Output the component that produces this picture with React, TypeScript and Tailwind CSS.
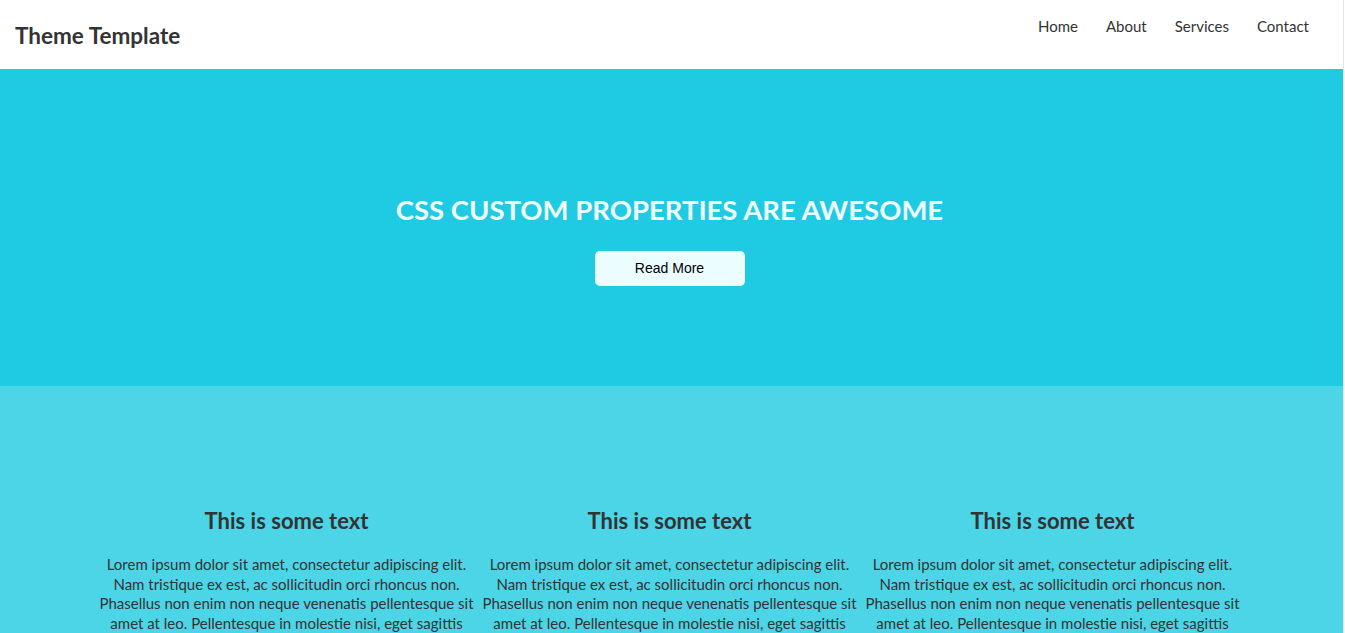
import React from "react";

const lorem =
  "Lorem ipsum dolor sit amet, consectetur adipiscing elit. Nam tristique ex est, ac sollicitudin orci rhoncus non. Phasellus non enim non neque venenatis pellentesque sit amet at leo. Pellentesque in molestie nisi, eget sagittis arcu. Vivamus vitae elit ut nisl pretium aliquet.";

export default function App() {
  const font = { fontFamily: "Lato, 'Open Sans', sans-serif" };
  return (
    <div className="h-[633px] w-[1344px] overflow-hidden border-r border-[#e5e5e5] bg-white" style={font}>
      <header className="flex h-[69px] items-start justify-between bg-white">
        <div className="pl-[15px] pt-[22px] text-[22.5px] font-bold leading-[28px] text-[#333]">
          Theme Template
        </div>
        <nav className="flex gap-[28px] pr-[34px] pt-[16px] text-[15px] leading-[20px] text-[#333]">
          <a>Home</a>
          <a>About</a>
          <a>Services</a>
          <a>Contact</a>
        </nav>
      </header>
      <section className="flex h-[317px] flex-col items-center bg-[#1fcbe2] pr-[4px] pt-[123px]">
        <h1 className="text-[27.5px] font-bold leading-[36px] text-[#f0fdff]">
          CSS CUSTOM PROPERTIES ARE AWESOME
        </h1>
        <button
          className="mt-[23px] h-[35px] w-[150px] rounded-[5px] bg-[#ecfdff] text-[14px] text-black"
          style={{ fontFamily: "'Liberation Sans', Arial, sans-serif" }}
        >
          Read More
        </button>
      </section>
      <section className="h-[247px] bg-[#4bd5e6] pt-[120px]">
        <div className="ml-[95px] grid w-[1149px] grid-cols-3">
          {[0, 1, 2].map((i) => (
            <div key={i} className="text-center text-[#333]">
              <h2 className="text-[22px] font-bold leading-[30px]">This is some text</h2>
              <p className="mt-[19px] text-[15px] leading-[19.5px]">{lorem}</p>
            </div>
          ))}
        </div>
      </section>
    </div>
  );
}
